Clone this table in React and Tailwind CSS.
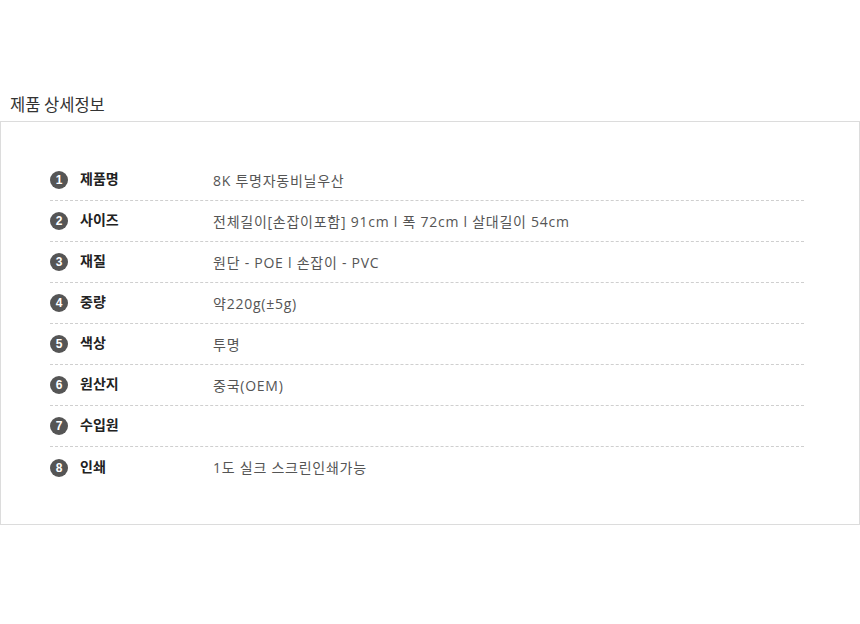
export default function App() {
  const rows = [
    ["제품명", "8K 투명자동비닐우산"],
    ["사이즈", "전체길이[손잡이포함] 91cm l 폭 72cm l 살대길이 54cm"],
    ["재질", "원단 - POE l 손잡이 - PVC"],
    ["중량", "약220g(±5g)"],
    ["색상", "투명"],
    ["원산지", "중국(OEM)"],
    ["수입원", ""],
    ["인쇄", "1도 실크 스크린인쇄가능"],
  ];
  return (
    <div className="w-[860px] h-[624px] bg-white" style={{ fontFamily: '"Noto Sans CJK KR", "Noto Sans", sans-serif' }}>
      <div className="pt-[93px] pl-[10px] h-[121px] text-[16.5px] leading-[22px] text-[#333]">제품 상세정보</div>
      <div className="w-[860px] h-[404px] border border-[#dcdcdc] pt-[38px] pl-[49px] pr-[55px]">
        {rows.map(([k, v], i) => (
          <div
            key={i}
            className={"flex items-center h-[41px] " + (i < rows.length - 1 ? "border-b border-dashed border-[#cfcfcf]" : "")}
          >
            <div className="w-[18px] h-[18px] rounded-full bg-[#555] text-white text-[12px] font-bold flex items-center justify-center leading-none" style={{ fontFamily: '"Liberation Sans", sans-serif' }}>
              {i + 1}
            </div>
            <div className="w-[145px] pl-[12px] text-[14px] font-bold text-[#222] -mt-[3px]">{k}</div>
            <div className="text-[14px] text-[#555] tracking-[0.75px]" style={{ fontFamily: '"Open Sans", "Noto Sans CJK KR", sans-serif' }}>{v}</div>
          </div>
        ))}
      </div>
    </div>
  );
}
